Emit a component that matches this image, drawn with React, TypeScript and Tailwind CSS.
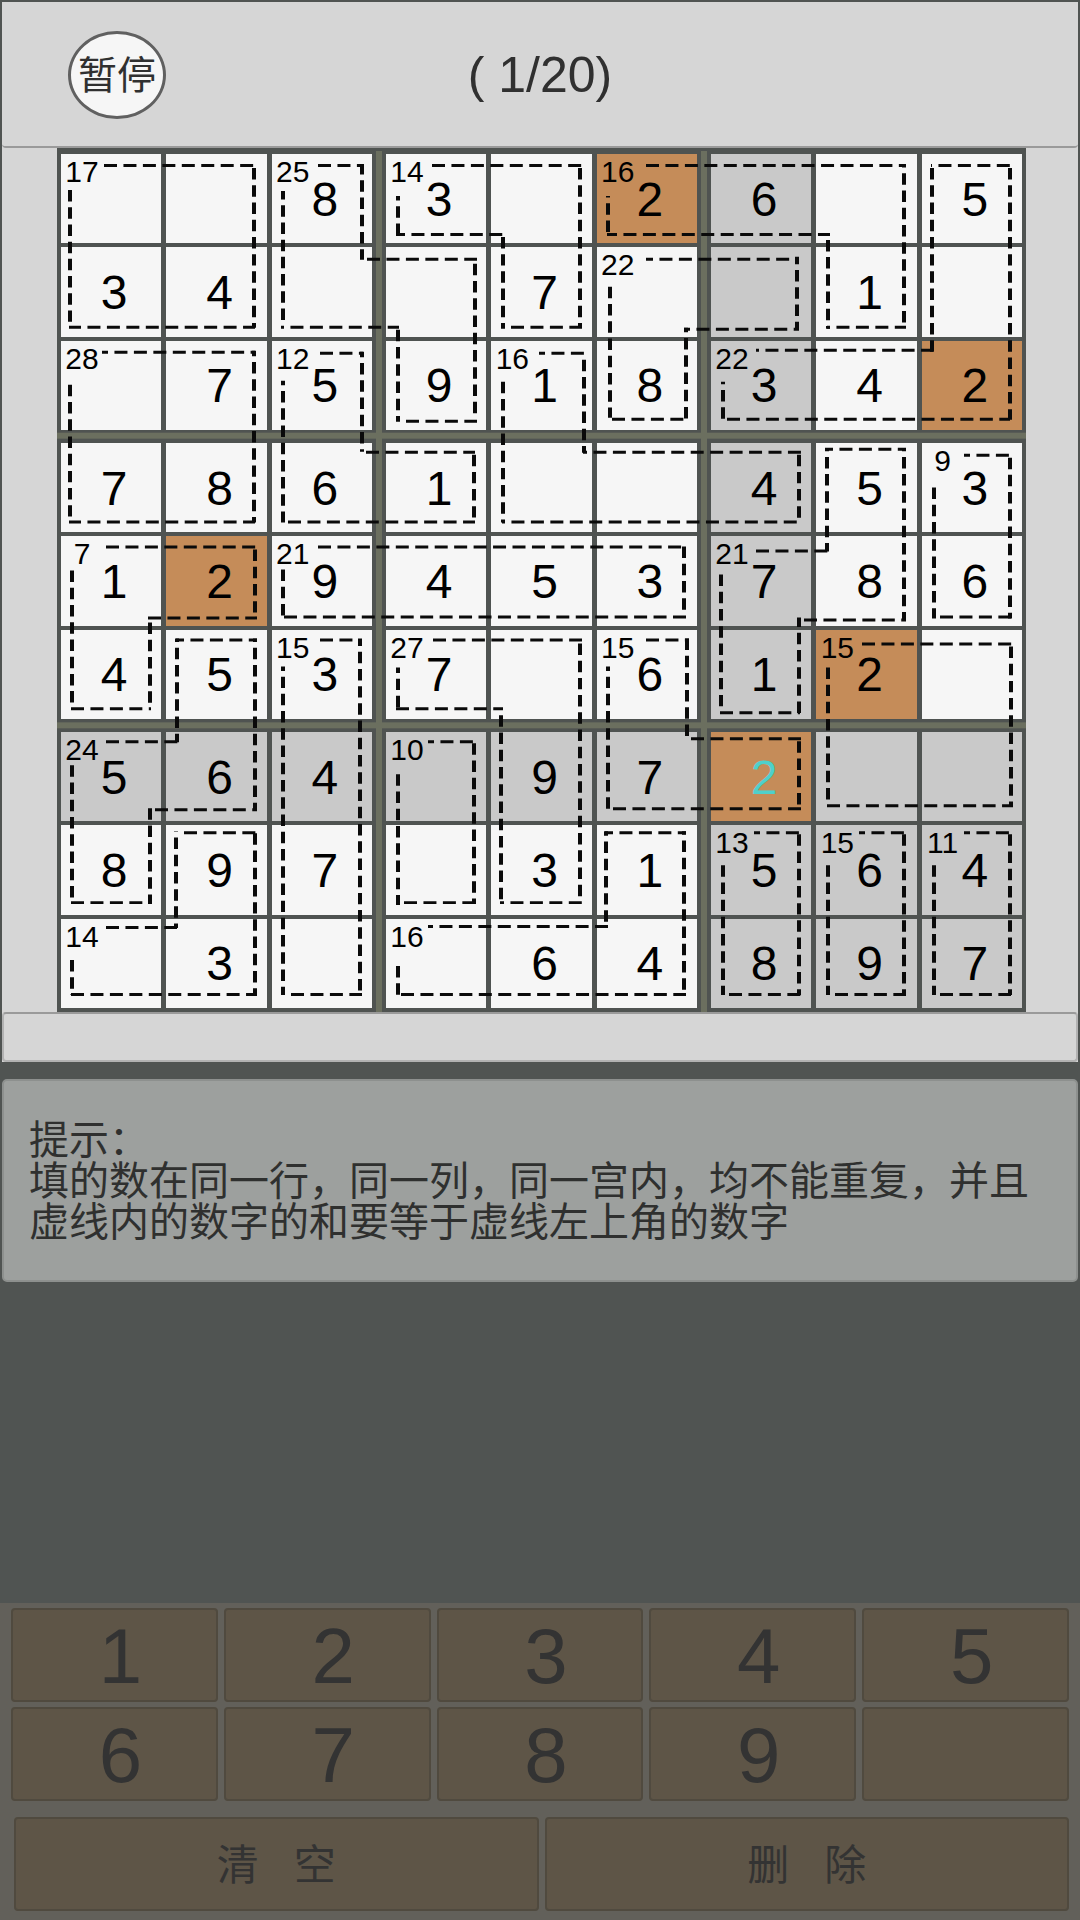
import React from "react";

const ROWS = [
  "..83.26.5",
  "34..7..1.",
  ".75918342",
  "7861..453",
  "129453786",
  "4537.612.",
  "564.972..",
  "897.31564",
  ".3..64897",
];

const SUMS: Record<string, number> = {
  "0-0": 17, "0-2": 25, "0-3": 14, "0-5": 16, "1-5": 22,
  "2-0": 28, "2-2": 12, "2-4": 16, "2-6": 22,
  "3-8": 9,
  "4-0": 7, "4-2": 21, "4-6": 21,
  "5-2": 15, "5-3": 27, "5-5": 15, "5-7": 15,
  "6-0": 24, "6-3": 10,
  "7-6": 13, "7-7": 15, "7-8": 11,
  "8-0": 14, "8-3": 16,
};

const SELECTED = { row: 6, col: 6 };

type Run = [number, number, number, number?];

const DASH_H = 13;
const DASH_V = 12;

// [y, from x, to x, length of the first dash]
const HORIZONTAL: Run[] = [
  [165, 104, 255], [327, 69, 255, 12], [165, 318, 363], [259, 367, 477], [421, 406, 477],
  [327, 281, 399, 3], [165, 432, 582], [327, 511, 582], [234, 396, 503, 9],
  [165, 646, 906], [234, 607, 830, 10], [327, 827, 906, 3], [165, 931, 1011, 1],
  [350, 756, 933, 3], [419, 727, 1010], [259, 646, 799, 7], [329, 684, 799, 6], [419, 612, 687],
  [352, 102, 255, 6], [522, 69, 255, 12], [353, 320, 363], [452, 366, 475], [522, 288, 475],
  [353, 539, 585, 6], [452, 583, 801, 4], [522, 502, 801, 3],
  [449, 825, 906, 8], [620, 804, 906], [551, 756, 828], [713, 720, 800],
  [455, 964, 1011, 6], [617, 940, 1011],
  [547, 106, 256], [618, 148, 257], [709, 71, 151], [547, 318, 686], [617, 284, 686],
  [640, 176, 257, 8], [742, 106, 178], [810, 155, 257], [903, 71, 151],
  [928, 106, 177], [833, 184, 256], [995, 71, 257],
  [640, 320, 353], [995, 291, 362], [640, 433, 582], [903, 500, 582, 4], [709, 396, 503],
  [640, 646, 689], [739, 691, 801], [809, 613, 801],
  [742, 428, 474, 6], [903, 404, 475], [927, 428, 608, 5], [833, 605, 686, 8], [995, 401, 686],
  [644, 862, 1013], [806, 827, 1013],
  [833, 754, 801, 6], [833, 859, 906, 6], [833, 964, 1011, 6],
  [995, 729, 801], [995, 835, 906], [995, 940, 1011],
];

// [x, from y, to y, length of the first dash]
const VERTICAL: Run[] = [
  [70, 190, 322], [254, 168, 328], [362, 164, 260, 11], [475, 264, 414], [398, 330, 422],
  [283, 191, 321, 9], [580, 168, 328], [503, 237, 329], [398, 196, 235, 5],
  [608, 196, 235, 2], [904, 164, 328, 4], [828, 240, 329], [1010, 168, 420], [932, 168, 352],
  [723, 382, 420, 3], [797, 257, 330, 8], [686, 328, 420, 5], [610, 287, 418],
  [254, 351, 523, 6], [70, 385, 517], [362, 352, 452, 6], [474, 455, 518], [283, 381, 523, 5],
  [584, 360, 453], [799, 455, 523], [503, 382, 523],
  [904, 449, 620, 3], [827, 449, 552, 3], [721, 575, 707], [799, 618, 714, 10],
  [1010, 458, 619], [934, 488, 619],
  [255, 550, 613], [150, 623, 704], [72, 571, 704], [684, 547, 611], [283, 570, 616],
  [177, 639, 743, 4], [255, 639, 811, 4], [150, 809, 905], [72, 766, 899],
  [176, 832, 929, 1], [255, 834, 996], [72, 961, 996],
  [360, 639, 992, 8], [283, 667, 996, 5], [580, 644, 897], [501, 716, 900], [398, 668, 710, 6],
  [687, 639, 740, 12], [799, 742, 810], [608, 667, 810, 5],
  [474, 744, 905], [398, 775, 906], [606, 832, 923, 5], [684, 832, 992, 4], [398, 967, 996],
  [1011, 647, 807], [828, 668, 801],
  [799, 835, 996], [904, 835, 996], [1010, 835, 996],
  [723, 866, 996], [828, 866, 996], [934, 866, 996],
];

const TEXT = "font-['Liberation_Sans','Noto_Sans_CJK_SC',sans-serif]";

function cellColor(row: number, col: number, digit: string) {
  if (digit === "2") return "bg-[#c58c59]";
  const sameBox = row >= 6 && col >= 6;
  if (row === SELECTED.row || col === SELECTED.col || sameBox) return "bg-[#c9c9c9]";
  return "bg-[#f6f6f6]";
}

function Cell({ row, col }: { row: number; col: number }) {
  const value = ROWS[row][col];
  const digit = value === "." ? "" : value;
  const sum = SUMS[`${row}-${col}`];
  const selected = row === SELECTED.row && col === SELECTED.col;
  return (
    <button
      type="button"
      aria-label={`第${row + 1}行第${col + 1}列 ${digit}`}
      className={`relative flex min-w-0 items-center justify-center pl-1.5 pt-0.5 text-[48px] leading-none ${cellColor(row, col, digit)} ${selected ? "text-[#4fd0cb]" : "text-black"}`}
    >
      {sum !== undefined && (
        <span className="absolute left-0 top-0 w-[42px] text-center text-[30px] leading-9 text-black">{sum}</span>
      )}
      {digit}
    </button>
  );
}

function Board() {
  return (
    <div className="relative ml-[55px] mr-[52px] bg-[#4f5351] px-1 pb-1 pt-1.5">
      <div className="grid grid-cols-3 gap-x-[14px] gap-y-[13px]">
        {[0, 1, 2, 3, 4, 5, 6, 7, 8].map((box) => {
          const top = Math.floor(box / 3) * 3;
          const left = (box % 3) * 3;
          return (
            <div key={box} className="grid h-[276px] grid-cols-3 grid-rows-3 gap-x-[5px] gap-y-1">
              {[0, 1, 2, 3, 4, 5, 6, 7, 8].map((i) => (
                <Cell key={i} row={top + Math.floor(i / 3)} col={left + (i % 3)} />
              ))}
            </div>
          );
        })}
      </div>
      <svg
        className="pointer-events-none absolute inset-0 h-full w-full"
        viewBox="57 148 969 865"
        preserveAspectRatio="none"
        aria-hidden="true"
      >
        <g fill="#6b6f5f">
          <rect x="57" y="433" width="969" height="6" />
          <rect x="57" y="723" width="969" height="6" />
          <rect x="376" y="151" width="6" height="862" />
          <rect x="701" y="151" width="6" height="862" />
        </g>
        <g stroke="#0a0a0a" fill="none">
          {HORIZONTAL.map(([y, x1, x2, first = DASH_H], i) => (
            <line key={i} x1={x1} x2={x2} y1={y + 0.5} y2={y + 0.5} strokeWidth="3" strokeDasharray="13 6.45" strokeDashoffset={DASH_H - first} />
          ))}
        </g>
        <g stroke="#0a0a0a" fill="none">
          {VERTICAL.map(([x, y1, y2, first = DASH_V], i) => (
            <line key={i} x1={x} x2={x} y1={y1} y2={y2} strokeWidth="4" strokeDasharray="11.5 5.75" strokeDashoffset={DASH_V - first} />
          ))}
        </g>
      </svg>
    </div>
  );
}

const KEY = "h-[94px] rounded-[4px] border-2 border-[#504a3f] bg-[#5e5547] leading-none text-[#333333]";

function Keypad() {
  return (
    <div className="mt-auto bg-[#62605a] px-[11px] pb-[9px] pt-[5px]">
      <div className="grid grid-cols-5 gap-x-1.5 gap-y-[5px]">
        {["1", "2", "3", "4", "5", "6", "7", "8", "9", ""].map((k, i) => (
          <button key={i} type="button" aria-label={k || "空白"} className={`${KEY} pl-3 pt-0.5 text-[78px]`}>
            {k}
          </button>
        ))}
      </div>
      <div className="mt-4 grid grid-cols-2 gap-x-1.5 pl-[3px]">
        <button type="button" className={`${KEY} whitespace-pre pt-1 text-[42px]`}>{"清   空"}</button>
        <button type="button" className={`${KEY} whitespace-pre pt-1 text-[42px]`}>{"删   除"}</button>
      </div>
    </div>
  );
}

export default function App() {
  return (
    <main className={`flex min-h-screen flex-col bg-[#505452] pt-0.5 ${TEXT}`}>
      <section className="mx-0.5 bg-[#d6d6d6]">
        <header className="grid h-[146px] grid-cols-3 items-center rounded-[4px] border-b-2 border-[#9a9a9a] pl-[66px] pt-0.5">
          <button
            type="button"
            className="h-[88px] w-[98px] rounded-[50%] border-[3px] border-[#606060] bg-[#f6f6f6] text-[39px] leading-none text-[#303030]"
          >
            暂停
          </button>
          <h1 className="-ml-[66px] text-center text-[50px] leading-none text-[#303030]">( 1/20)</h1>
        </header>
        <Board />
        <div className="h-[50px] rounded-[4px] border-2 border-[#b2b2b2] border-t-[#9a9a9a]" />
      </section>

      <section className="mx-0.5 mt-[17px] h-[203px] rounded-[5px] border-2 border-[#8d908e] bg-[#9da09e] pl-[25px] pr-10 pt-[39px] text-[40px] leading-[41px] text-[#2f302f]">
        <p>提示：</p>
        <p>填的数在同一行，同一列，同一宫内，均不能重复，并且虚线内的数字的和要等于虚线左上角的数字</p>
      </section>

      <Keypad />
    </main>
  );
}
